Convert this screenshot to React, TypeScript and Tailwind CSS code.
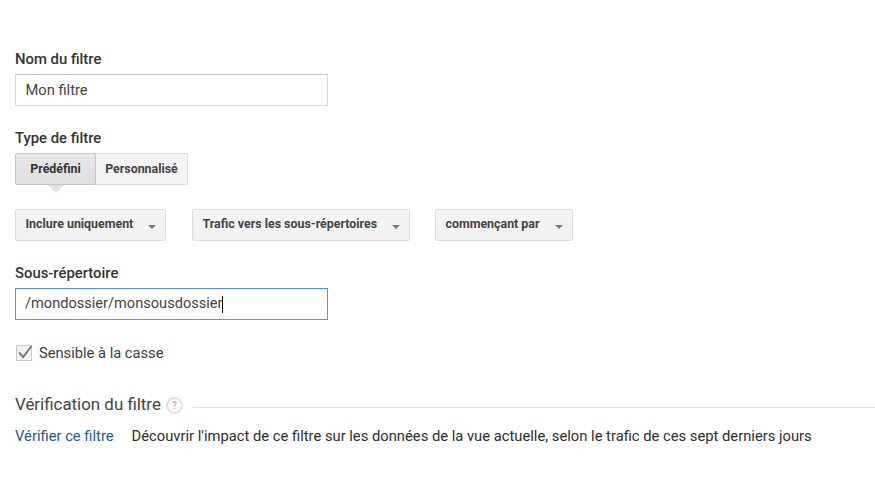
export default function App() {
  const font = "font-['Roboto',sans-serif]";
  const Drop = ({ label, w }: { label: string; w: string }) => (
    <div className={`${w} h-8 flex items-center justify-between pl-[9.5px] pr-[8px] rounded-[2px] border border-[#dcdcdc] bg-gradient-to-b from-[#f5f5f5] to-[#f1f1f1] text-[12.4px] font-bold text-[#444]`}>
      <span className="-mt-[2px]">{label}</span>
      <span className="mt-[4px] mr-[1px] w-0 h-0 border-l-[4px] border-r-[4px] border-t-[4px] border-l-transparent border-r-transparent border-t-[#777]" />
    </div>
  );
  return (
    <div className={`${font} w-[875px] h-[486px] bg-white overflow-hidden pl-[15px] pt-[50px] text-[#333]`}>
      <div className="text-[14.85px] leading-[18px] font-medium text-[#333]">Nom du filtre</div>
      <div className="mt-[6px] w-[313px] h-8 border border-[#d9d9d9] border-t-[#c0c0c0] flex items-center pl-[9.5px] text-[14.7px] text-[#444]">Mon filtre</div>
      <div className="mt-[23px] text-[14.85px] leading-[18px] font-medium">Type de filtre</div>
      <div className="relative mt-[6px] flex w-[173px] h-8 text-[12.4px] font-bold text-[#444]">
        <div className="w-[81px] flex items-center justify-center rounded-l-[2px] border border-[#c6c6c6] bg-gradient-to-b from-[#e6e6e6] to-[#e0e0e0] text-[#333]">Prédéfini</div>
        <div className="flex-1 flex items-center justify-center rounded-r-[2px] border border-l-0 border-[#dcdcdc] bg-[#f4f4f4]">Personnalisé</div>
        <span className="absolute left-[33px] top-8 w-0 h-0 border-l-[8px] border-r-[8px] border-t-[8px] border-l-transparent border-r-transparent border-t-[#e4e4e4]" />
      </div>
      <div className="mt-[24px] flex">
        <Drop label="Inclure uniquement" w="w-[151px]" />
        <div className="w-[26px]" />
        <Drop label="Trafic vers les sous-répertoires" w="w-[218px]" />
        <div className="w-[25px]" />
        <Drop label="commençant par" w="w-[138px]" />
      </div>
      <div className="mt-[23px] text-[14.85px] leading-[18px] font-medium">Sous-répertoire</div>
      <div className="mt-[6px] w-[313px] h-8 border border-[#5b93d3] shadow-[inset_0_1px_1px_rgba(77,144,254,0.25)] flex items-center pl-[9px] text-[14.6px] text-[#444]">
        <span>/mondossier/monsousdossier</span>
        <span className="w-px h-[17px] bg-[#111] -ml-px" />
      </div>
      <div className="mt-[25px] flex items-center h-[16px] text-[14.7px] text-[#3c3c3c]">
        <span className="ml-px w-[16px] h-[16px] border border-[#c6c6c6] bg-[#f3f3f3] rounded-[1px]">
          <svg width="16" height="16" viewBox="0 0 16 16" className="overflow-visible -m-px"><path d="M3 7.5 L7.2 12 L15.5 1" fill="none" stroke="#777" strokeWidth="2" /></svg>
        </span>
        <span className="ml-[7px]">Sensible à la casse</span>
      </div>
      <div className="mt-[34px] flex items-center h-[20px]">
        <span className="text-[16.9px] text-[#444]">Vérification du filtre</span>
        <span className="ml-[5px] w-[17px] h-[17px] rounded-full border-2 border-[#e0e0e0] flex items-center justify-center text-[10px] font-bold text-[#bbb]">?</span>
        <span className="ml-[10px] flex-1 h-px bg-[#e0e0e0] mt-[5px]" />
      </div>
      <div className="mt-[12px] flex text-[14.76px] leading-[18px] whitespace-nowrap">
        <span className="text-[#1c5a92]">Vérifier ce filtre</span>
        <span className="ml-[18px] text-[#2e2e2e]">Découvrir l'impact de ce filtre sur les données de la vue actuelle, selon le trafic de ces sept derniers jours</span>
      </div>
    </div>
  );
}
